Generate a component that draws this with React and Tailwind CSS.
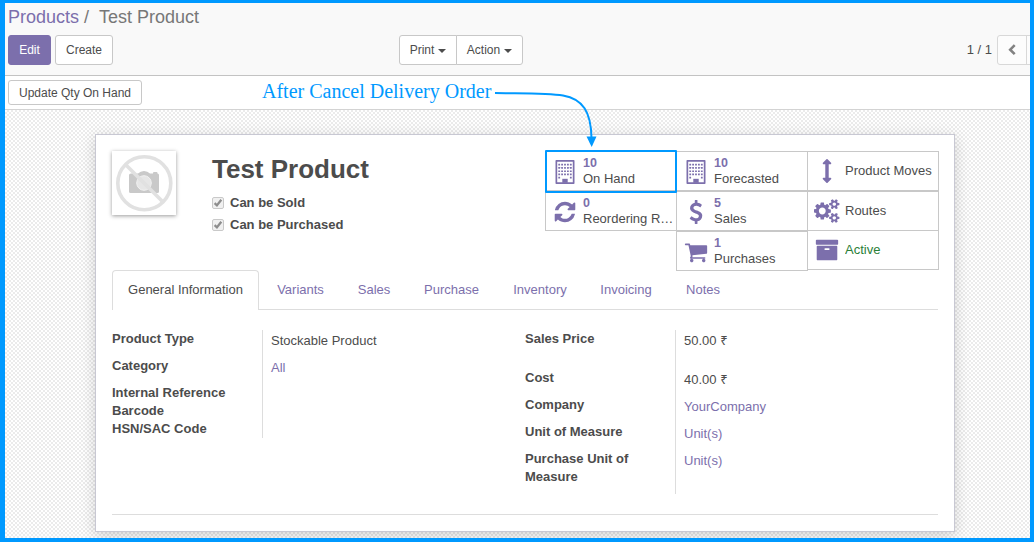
import React from "react";

const FA = ({ d, box = "0 0 1792 1792", className = "w-6 h-6" }) => (
  <svg viewBox={box} className={className} fill="currentColor"><path d={d} /></svg>
);

const Building = () => (
  <svg viewBox="0 0 24 24" className="h-6 w-6" fill="currentColor">
    <path fillRule="evenodd" d="M3.300 0h17.400q.8 0 .8.8v22.400q0 .8-.8.8H3.300q-.8 0-.8-.8V.8q0-.8.8-.8zM4.200 1.700v20.600h15.600V1.700z" />
    <path d="M9.300 18.800h5.400v4H9.300z" />
    {[3.8, 7, 10.4, 13.6, 16.8].map((y) =>
      [5.3, 8.2, 11.1, 14, 16.900].filter((x) => y < 16 || x < 6 || x > 16).map((x) => (
        <rect key={x + "-" + y} x={x} y={y} width="1.800" height="1.700" rx="0.2" />
      ))
    )}
  </svg>
);

const REFRESH = "M1511 1056q0 5-1 7-64 268-268 434.500t-478 166.500q-146 0-282.500-55t-243.500-157l-129 129q-19 19-45 19t-45-19-19-45v-448q0-26 19-45t45-19h448q26 0 45 19t19 45-19 45l-137 137q71 66 161 102t187 36q134 0 250-65t186-179q11-17 53-117 8-23 30-23h192q13 0 22.500 9.500t9.500 22.500zm25-800v448q0 26-19 45t-45 19h-448q-26 0-45-19t-19-45 19-45l138-138q-148-137-349-137-134 0-250 65t-186 179q-11 17-53 117-8 23-30 23h-199q-13 0-22.500-9.500t-9.500-22.500v-7q65-268 270-434.500t480-166.500q146 0 284 55.500t245 156.500l130-129q19-19 45-19t45 19 19 45z";
const DOLLAR = "M1362 1185q0 153-99.500 263.500t-258.500 136.500v175q0 14-9 23t-23 9h-135q-13 0-22.500-9.500t-9.500-22.500v-175q-66-9-127.500-31t-101.500-44.500-74-48-46.500-37.500-17.500-18q-17-21-2-41l103-135q7-10 23-12 15-2 24 9l2 2q113 99 243 125 37 8 74 8 81 0 142.500-43t61.500-122q0-28-15-53t-33.500-42-58.500-37.500-66-32-80-32.500q-39-16-61.500-25t-61.500-26.500-62.500-31-56.500-35.500-53.500-42.500-43.500-49-35.500-58-21-66.500-8.500-78q0-138 98-242t255-134v-180q0-13 9.500-22.500t22.500-9.500h135q14 0 23 9t9 23v176q57 6 110.500 23t87 33.500 63.500 37.500 39 29 15 14q17 18 5 38l-81 146q-8 15-23 16-14 3-27-7-3-3-14.500-12t-39-26.500-58.500-32-74.500-26-85.500-11.500q-95 0-155 43t-60 111q0 26 8.500 48t29.500 41.500 39.500 33 56 31 60.500 27 70 27.500q53 20 81 31.500t76 35 75.500 42.500 62 50 53 63.500 31.500 76.500 13 94z";
const CART = "M704 1536q0 52-38 90t-90 38-90-38-38-90 38-90 90-38 90 38 38 90zm896 0q0 52-38 90t-90 38-90-38-38-90 38-90 90-38 90 38 38 90zm128-1088v512q0 24-16.500 42.500t-40.500 21.500l-1044 122q13 60 13 70 0 16-24 64h920q26 0 45 19t19 45-19 45-45 19h-1024q-26 0-45-19t-19-45q0-11 8-31.500t16-36 21.500-40 15.500-29.500l-177-823h-204q-26 0-45-19t-19-45 19-45 45-19h256q16 0 28.500 6.500t19.500 15.500 13 24.500 8 26 5.500 29.500 4.500 26h1201q26 0 45 19t19 45z";
const ARROWS = "M1216 320q0 26-19 45t-45 19h-128v1024h128q26 0 45 19t19 45-19 45l-256 256q-19 19-45 19t-45-19l-256-256q-19-19-19-45t19-45 45-19h128v-1024h-128q-26 0-45-19t-19-45 19-45l256-256q19-19 45-19t45 19l256 256q19 19 19 45z";
const ARCHIVE = "M1088 832q0-26-19-45t-45-19h-256q-26 0-45 19t-19 45 19 45 45 19h256q26 0 45-19t19-45zm576-192v960q0 26-19 45t-45 19h-1408q-26 0-45-19t-19-45v-960q0-26 19-45t45-19h1408q26 0 45 19t19 45zm64-448v256q0 26-19 45t-45 19h-1536q-26 0-45-19t-19-45v-256q0-26 19-45t45-19h1536q26 0 45 19t19 45z";
const COGS = "M832 896q0-106-75-181t-181-75-181 75-75 181 75 181 181 75 181-75 75-181zm768 512q0-52-38-90t-90-38-90 38-38 90q0 53 37.500 90.500t90.500 37.500 90.500-37.500 37.500-90.500zm0-1024q0-52-38-90t-90-38-90 38-38 90q0 53 37.500 90.500t90.500 37.500 90.500-37.500 37.500-90.500zm-384 421v185q0 10-7 19.500t-16 10.500l-155 24q-11 35-32 76 34 48 90 115 7 11 7 20 0 12-7 19-23 30-82.500 89.500t-78.500 59.500q-11 0-21-7l-115-90q-37 19-77 31-11 108-23 155-7 24-30 24h-186q-11 0-20-7.500t-10-17.500l-23-153q-34-10-75-31l-118 89q-7 7-20 7-11 0-21-8-144-133-144-160 0-9 7-19 10-14 41-53t47-61q-23-44-35-82l-152-24q-10-1-17-9.500t-7-19.500v-185q0-10 7-19.500t16-10.500l155-24q11-35 32-76-34-48-90-115-7-11-7-20 0-12 7-20 22-30 82-89t79-59q11 0 21 7l115 90q34-18 77-32 11-108 23-154 7-24 30-24h186q11 0 20 7.500t10 17.500l23 153q34 10 75 31l118-89q8-7 20-7 11 0 21 8 144 133 144 160 0 8-7 19-12 16-42 54t-45 60q23 48 34 82l152 23q10 2 17 10.500t7 19.500zm640 533v140q0 16-149 31-12 27-30 52 51 113 51 138 0 4-4 7-122 71-124 71-8 0-46-47t-52-68q-20 2-30 2t-30-2q-14 21-52 68t-46 47q-2 0-124-71-4-3-4-7 0-25 51-138-18-25-30-52-149-15-149-31v-140q0-16 149-31 13-29 30-52-51-113-51-138 0-4 4-7 4-2 35-20t59-34 30-16q8 0 46 46.500t52 67.500q20-2 30-2t30 2q51-71 92-112l6-2q4 0 124 70 4 3 4 7 0 25-51 138 17 23 30 52 149 15 149 31zm0-1024v140q0 16-149 31-12 27-30 52 51 113 51 138 0 4-4 7-122 71-124 71-8 0-46-47t-52-68q-20 2-30 2t-30-2q-14 21-52 68t-46 47q-2 0-124-71-4-3-4-7 0-25 51-138-18-25-30-52-149-15-149-31v-140q0-16 149-31 13-29 30-52-51-113-51-138 0-4 4-7 4-2 35-20t59-34 30-16q8 0 46 46.500t52 67.500q20-2 30-2t30 2q51-71 92-112l6-2q4 0 124 70 4 3 4 7 0 25-51 138 17 23 30 52 149 15 149 31z";

const Btn = ({ children, className = "" }) => (
  <button className={`border border-[#c8c8c8] bg-white text-[12px] leading-[18px] text-[#4c4c4c] flex items-center justify-center ${className}`}>
    {children}
  </button>
);

const Caret = () => (
  <svg className="ml-[4px] mt-[2px] h-1 w-2 shrink-0" viewBox="0 0 8 4"><path d="M0 0h8L4 4z" fill="#4c4c4c" /></svg>
);

const Stat = ({ icon, value, label, className = "", labelClass = "" }) => (
  <div className={`flex h-10 w-[132px] shrink-0 items-center border border-[#c8c8c8] bg-white ${className}`}>
    <span className={`flex w-[37px] shrink-0 justify-center text-[#7c6fac] ${value ? "pt-px" : ""}`}>{icon}</span>
    <span className={`min-w-0 flex-1 text-[13px] leading-[15px] ${value ? "" : "pb-[2px]"}`}>
      {value && <b className="block text-[12.500px] text-[#7c6fac]">{value}</b>}
      <span className={`block truncate ${labelClass}`}>{label}</span>
    </span>
  </div>
);

const Check = ({ label }) => (
  <div className="flex h-[22px] items-center">
    <svg viewBox="0 0 12 12" className="mr-1.5 h-3 w-3">
      <rect x=".5" y=".5" width="11" height="11" rx="1.500" fill="#f0f0f0" stroke="#c9c9c9" />
      <path d="M2.600 6.200l2.300 2.200 4.400-5.600" fill="none" stroke="#8d8d8d" strokeWidth="2.300" />
    </svg>
    <b className="text-[13px] leading-[18px]">{label}</b>
  </div>
);

const Row = ({ label, value, link, className = "h-[27px]" }) => (
  <div className={`flex ${className}`}>
    <b className="block w-[150px] shrink-0 pr-8 leading-[18px]">{label}</b>
    <span className={`block border-l border-[#ddd] pl-2 pt-0.5 leading-[18px] ${link ? "text-[#7c6fac]" : ""}`}>{value}</span>
  </div>
);

const Price = ({ children }) => (
  <>{children} <span className="font-['Noto_Sans',sans-serif] text-[13px] leading-none">₹</span></>
);

const tabs = [
  ["Variants", "w-[81px]"],
  ["Sales", "w-[66px]"],
  ["Purchase", "w-[89px]"],
  ["Inventory", "w-[88px]"],
  ["Invoicing", "w-[84px]"],
  ["Notes", "w-[70px]"],
];

export default function App() {
  return (
    <div className="relative flex h-[542px] w-[1034px] flex-col overflow-hidden border-t-[3px] border-r-4 border-b-4 border-l-[5px] border-[#0099ff] bg-white font-['Liberation_Sans',Arial,sans-serif] text-[13px] text-[#4c4c4c]">
      <header className="h-[73px] shrink-0 border-b border-[#c3c3c3] bg-[#f9f9f9] pl-[3px]">
        <div className="pt-[1px] text-[18px] leading-[26px] text-[#777]">
          <span className="text-[#7c6fac]">Products</span>
          <span className="ml-[5px]">/</span>
          <span className="ml-[10px]">Test Product</span>
        </div>
        <div className="mt-[5px] flex h-[30px]">
          <Btn className="w-[43px] rounded-[3px] border-[#7c6fac]! bg-[#7c6fac]! text-white!">Edit</Btn>
          <Btn className="ml-1 w-[58px] rounded-[3px]">Create</Btn>
          <Btn className="ml-[286px] w-[58px] rounded-l-[3px]">Print<Caret /></Btn>
          <Btn className="-ml-px w-[67px] rounded-r-[3px]">Action<Caret /></Btn>
          <span className="ml-auto mr-[5px] text-[13px] leading-[29px]">1 / 1</span>
          <Btn className="w-[30px] rounded-l-[3px] border-[#d8d8d8]! bg-[#fcfcfc]!">
            <svg viewBox="0 0 8 12" className="h-3 w-2"><path d="M6.700 1.200L2.200 5.700l4.500 4.500" fill="none" stroke="#828282" strokeWidth="2.600" /></svg>
          </Btn>
          <Btn className="-ml-px w-[4px] border-r-0 border-[#d8d8d8]! bg-[#fcfcfc]!" />
        </div>
      </header>
      <div className="h-[34px] shrink-0 border-b border-[#d3d3d3] pl-[3px] pt-1">
        <Btn className="h-[25px] w-[134px] rounded-[3px]">Update Qty On Hand</Btn>
      </div>
      <main className="min-h-0 flex-1 bg-[repeating-conic-gradient(#ebebeb_0_25%,#ffffff_0_50%)] bg-[length:4px_4px] pl-[90px] pt-6">
        <section className="h-[398px] w-[860px] border border-[#c8c8d3] bg-white px-4 pt-4 shadow-[0_4px_14px_rgba(0,0,0,0.17)]">
          <div className="flex h-[119px]">
            <svg viewBox="0 0 64 64" className="h-16 w-16 shrink-0 bg-white shadow-[0_1px_4px_rgba(0,0,0,0.4)]">
              <path d="M19 22.500h7Q28.500 20 32 20t6 2.500h3V22q0-1 1-1h2.500q1 0 1 1v.5q1.500.2 1.500 1.500v16.500q0 1.500-1.500 1.500h-27Q17 42 17 40.500V24q0-1.500 2-1.500z" fill="#c9c9c9" />
              <circle cx="32" cy="32" r="7.300" fill="#e6e6e6" stroke="#f2f2f2" />
              <g fill="none" stroke="#e1e1e1" strokeWidth="3.600">
                <circle cx="32.300" cy="32.300" r="26.500" />
                <path d="M13.500 13.500L51 51" />
              </g>
            </svg>
            <div className="ml-9">
              <h1 className="mt-[2px] h-[39px] text-[26px] font-bold leading-[32px]">Test Product</h1>
              <Check label="Can be Sold" />
              <Check label="Can be Purchased" />
            </div>
            <div className="-mr-px ml-auto flex">
              <div className="flex flex-col">
                <Stat icon={<Building />} value="10" label="On Hand" />
                <Stat icon={<FA d={REFRESH} box="-128 0 1792 1792" />} value="0" label="Reordering R…" />
              </div>
              <div className="-ml-px flex flex-col">
                <Stat icon={<Building />} value="10" label="Forecasted" />
                <Stat icon={<FA d={DOLLAR} />} value="5" label="Sales" />
                <Stat icon={<FA d={CART} />} value="1" label="Purchases" />
              </div>
              <div className="-ml-px flex flex-col">
                <Stat icon={<FA d={ARROWS} />} label="Product Moves" />
                <Stat icon={<FA d={COGS} box="0 0 1856 1792" className="h-6 w-[26px]" />} label="Routes" />
                <Stat icon={<FA d={ARCHIVE} />} label="Active" className="-mt-px" labelClass="text-[#2b8039]" />
              </div>
            </div>
          </div>
          <nav className="flex h-10 border-b border-[#ddd] leading-[38px]">
            <span className="z-10 h-10 w-[147px] rounded-t-[4px] border border-b-0 border-[#ddd] bg-white text-center">General Information</span>
            <div className="ml-[1px] flex pt-px text-center text-[#7c6fac]">
              {tabs.map(([t, w]) => <span key={t} className={w}>{t}</span>)}
            </div>
          </nav>
          <div className="flex h-[205px] border-b border-[#ddd] pt-5">
            <div className="w-[413px]">
              <Row label="Product Type" value="Stockable Product" />
              <Row label="Category" value="All" link />
              <Row label="Internal Reference" className="h-[18px]" />
              <Row label="Barcode" className="h-[18px]" />
              <Row label="HSN/SAC Code" className="h-[18px]" />
            </div>
            <div className="w-[413px]">
              <Row label="Sales Price" value={<Price>50.00</Price>} className="h-[39px]" />
              <Row label="Cost" value={<Price>40.00</Price>} />
              <Row label="Company" value="YourCompany" link />
              <Row label="Unit of Measure" value="Unit(s)" link />
              <Row label="Purchase Unit of Measure" value="Unit(s)" link className="h-[44px]" />
            </div>
          </div>
        </section>
      </main>
      <div className="absolute left-[257px] top-[75px] whitespace-nowrap font-['Liberation_Serif',serif] text-[20px] leading-[26px] text-[#0099ff]">After Cancel Delivery Order</div>
      <div className="absolute left-[540px] top-[147px] h-[43px] w-[132px] rounded-[1px] border-2 border-[#0099ff]" />
      <svg className="absolute left-[485px] top-[82px] h-[66px] w-[120px]" viewBox="490 85 120 66">
        <path d="M495 93C525 93.500 548 93 563 95.500C583 99 591 112 591.500 138" fill="none" stroke="#0099ff" strokeWidth="2" />
        <path d="M586.500 136.500h10L591.700 147z" fill="#0099ff" />
      </svg>
    </div>
  );
}
